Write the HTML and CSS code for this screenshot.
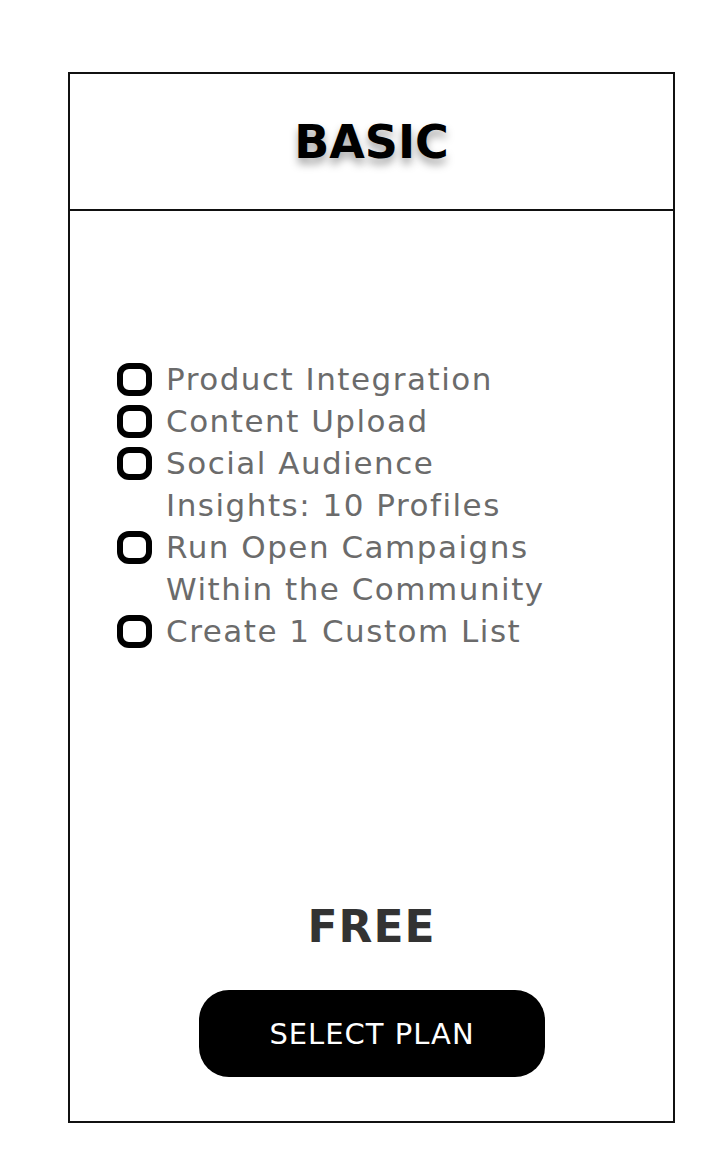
FILE: index.html
```html
<!DOCTYPE html>
<html lang="en">
<head>
    <meta charset="UTF-8">
    <meta name="viewport" content="width=device-width, initial-scale=1.0">
    <title>Basic Plan</title>
    <link rel="stylesheet" href="styles.css">
</head>
<body>
    <div class="plan">
        <header class="plan-head">
            <h1>BASIC</h1>
        </header>

        <div class="plan-body">
            <ul class="features">
                <li><span class="box"></span><span class="label">Product Integration</span></li>
                <li><span class="box"></span><span class="label">Content Upload</span></li>
                <li><span class="box"></span><span class="label">Social Audience Insights: 10 Profiles</span></li>
                <li><span class="box"></span><span class="label">Run Open Campaigns Within the Community</span></li>
                <li><span class="box"></span><span class="label">Create 1 Custom List</span></li>
            </ul>

            <p class="price">FREE</p>
            <button class="select">SELECT PLAN</button>
        </div>
    </div>
</body>
</html>
```

FILE: styles.css
```css
body {
    font-family: "DejaVu Sans", sans-serif;
    margin: 0;
    padding: 72px 0 0 68px;
    background: #fff;
}
.plan {
    width: 607px;
    box-sizing: border-box;
    border: 2px solid #111;
}
.plan-head {
    height: 135px;
    border-bottom: 2px solid #111;
    display: flex;
    align-items: center;
    justify-content: center;
}
.plan-head h1 {
    margin: 0;
    font-size: 46px;
    font-weight: bold;
    color: #000;
    text-shadow: 0 6px 9px rgba(0, 0, 0, 0.35);
}
.plan-body {
    padding: 147px 0 44px 47px;
    display: flex;
    flex-direction: column;
}
.features {
    list-style: none;
    margin: 0;
    padding: 0;
}
.features li {
    display: flex;
    align-items: flex-start;
    font-size: 31px;
    letter-spacing: 1.5px;
    line-height: 42px;
    color: #6b6b6b;
}
.box {
    flex: none;
    width: 35px;
    height: 33px;
    box-sizing: border-box;
    border: 6px solid #000;
    border-radius: 12px;
    margin: 5px 14px 0 0;
}
.label {
    width: 400px;
}
.price {
    margin: 246px 0 0 -47px;
    text-align: center;
    font-size: 44px;
    font-weight: bold;
    letter-spacing: 1px;
    line-height: 58px;
    color: #333;
}
.select {
    align-self: flex-start;
    margin: 34px 0 0 82px;
    width: 346px;
    height: 87px;
    background: #000;
    color: #fff;
    border: none;
    border-radius: 30px;
    font-family: "DejaVu Sans", sans-serif;
    font-size: 29px;
    letter-spacing: 1px;
    cursor: pointer;
}
```
